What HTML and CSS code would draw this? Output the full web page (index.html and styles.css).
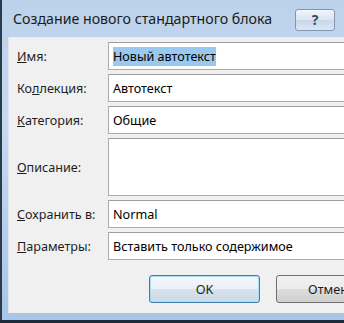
FILE: index.html
```html
<!DOCTYPE html>
<html lang="ru">
<head>
    <meta charset="UTF-8">
    <title>Создание нового стандартного блока</title>
    <link rel="stylesheet" href="styles.css">
</head>
<body>
    <div class="window">
        <div class="titlebar">
            <span class="title">Создание нового стандартного блока</span>
            <span class="help">?</span>
        </div>
        <div class="client">
            <div class="form">
                <label><u>И</u>мя:</label>
                <div class="box"><span class="selected">Новый автотекст</span></div>

                <label>Ко<u>л</u>лекция:</label>
                <div class="box">Автотекст</div>

                <label><u>К</u>атегория:</label>
                <div class="box">Общие</div>

                <label class="desc-label"><u>О</u>писание:</label>
                <div class="box desc"></div>

                <label><u>С</u>охранить в:</label>
                <div class="box">Normal</div>

                <label><u>П</u>араметры:</label>
                <div class="box">Вставить только содержимое</div>
            </div>
            <div class="buttons">
                <button class="btn default">OK</button>
                <button class="btn">Отмена</button>
            </div>
        </div>
    </div>
</body>
</html>
```

FILE: styles.css
```css
html, body { margin: 0; padding: 0; }
body { width: 344px; height: 323px; overflow: hidden; font-family: "Segoe UI", "Noto Sans", sans-serif; font-size: 12.6px; color: #000; background: #1c2a3a; }
.window { height: 320px; display: flex; flex-direction: column; border-left: 2px solid #2b3b4e; background: linear-gradient(#bcd2eb, #c6d9ef 40%, #a9c5e7); }
.titlebar { height: 37px; display: flex; align-items: center; padding-left: 11px; box-sizing: border-box; }
.title { font-size: 14.2px; color: #1b1b1b; flex: 1; }
.help { width: 38px; height: 20px; margin-right: 9px; margin-top: 2px; border: 1px solid #8197b1; border-radius: 3px; background: linear-gradient(#f1f5fa, #dae5f1 50%, #c8d8ea 51%, #dbe6f3); text-align: center; font-size: 14px; font-weight: bold; line-height: 20px; color: #3a4a5c; }
.client { flex: 1; margin: 0 0 7px 6px; background: #f0f0f0; border-top: 1px solid #e6ecf3; border-left: 1px solid #dfe6ee; overflow: hidden; }
.form { display: grid; grid-template-columns: 91px 260px; row-gap: 4px; padding: 4px 0 0 8px; }
.form label { display: flex; align-items: center; height: 28px; color: #1e1e1e; }
.box { height: 28px; box-sizing: border-box; border: 1px solid #a9abae; border-top-color: #9c9ea2; background: #fff; padding: 0 0 0 4px; display: flex; align-items: center; white-space: nowrap; }
.box.desc { height: 58px; }
.form .desc-label { height: 58px; }
.selected { background: #99c9ef; padding: 1px 0; }
.buttons { display: flex; gap: 16px; padding: 15px 0 0 140px; }
.btn { height: 28px; width: 111px; flex: none; font-family: inherit; font-size: 12.6px; color: #1e1e1e; border: 1px solid #707070; border-radius: 3px; background: linear-gradient(#f2f2f2, #ebebeb 50%, #dddddd 51%, #cfcfcf); padding: 0; }
.btn.default { border-color: #3c7fb1; box-shadow: inset 0 0 0 1px #a8dcf1; background: linear-gradient(#f4f8fb, #e8eff5 50%, #d7e3ec 51%, #cbdae6); }
```
